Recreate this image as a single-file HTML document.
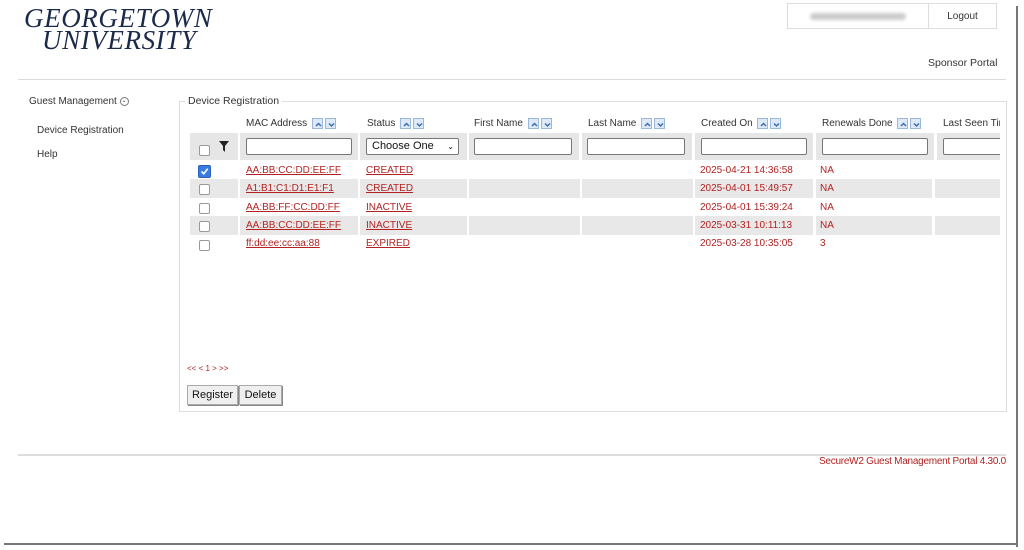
<!DOCTYPE html>
<html><head><meta charset="utf-8"><style>
*{box-sizing:border-box;margin:0;padding:0}
body{width:1024px;height:550px;background:#fff;font-family:"Liberation Sans",Arial,sans-serif;font-size:10px;color:#333;position:relative;overflow:hidden}
.a{position:absolute}
.sh{background:#777}
.logo{font-family:"Liberation Serif",serif;font-style:italic;color:#1a2a4a;line-height:21px;letter-spacing:0.6px}
.arr{display:inline-block;width:11px;height:11px;border:1px solid #9bb8d8;background:#dde9f6;vertical-align:middle;margin-left:2px;position:relative}
.arr svg{position:absolute;left:1px;top:1px}
.inp{position:absolute;height:17px;border:1px solid #777;border-radius:2px;background:#fff}
.cb{position:absolute;width:11px;height:11px;border:1px solid #999;border-radius:2px;background:#fff}
.red{color:#b22222}
.lnk{color:#b22222;text-decoration:underline}
.btn{position:absolute;height:20px;border:1px solid #aaa;background:#efefef;font-size:11px;color:#111;text-align:center;line-height:18px;box-shadow:1px 1px 0 #888}
.t{margin-top:2px}
</style></head><body>
<div class="a sh" style="left:1016px;top:6px;width:2px;height:541px"></div>
<div class="a sh" style="left:4px;top:543px;width:1014px;height:2px"></div>

<div class="a logo" style="left:24px;top:8px;font-size:27px">GEORGETOWN</div>
<div class="a logo" style="left:42px;top:30px;font-size:27px">UNIVERSITY</div>

<div class="a" style="left:787px;top:3px;width:142px;height:26px;border:1px solid #ddd"><div style="margin:9px 22px;height:7px;background:#ccc;border-radius:4px;filter:blur(1.5px)"></div></div>
<div class="a" style="left:928px;top:3px;width:69px;height:26px;border:1px solid #ddd;text-align:center;line-height:26px;font-size:10px;color:#333">Logout</div>
<div class="a" style="left:928px;top:57px;font-size:10.5px;color:#333">Sponsor Portal</div>
<div class="a" style="left:18px;top:79px;width:988px;height:1px;background:#ddd"></div>

<div class="a" style="left:29px;top:96px">Guest Management <span style="display:inline-block;width:9px;height:9px;border:1px solid #777;border-radius:50%;font-size:6px;line-height:7px;text-align:center;vertical-align:middle">&#8964;</span></div>
<div class="a" style="left:37px;top:125px">Device Registration</div>
<div class="a" style="left:37px;top:149px">Help</div>

<div class="a" style="left:179px;top:101px;width:828px;height:311px;border:1px solid #ddd"></div>
<div class="a" style="left:185px;top:95px;background:#fff;padding:0 3px;font-size:10.5px">Device Registration</div>

<div class="a" style="top:118px;left:246px">MAC Address <span class="arr"><svg width="9" height="9"><path d="M2 6L4.5 3.5L7 6" stroke="#3a6fb0" stroke-width="1.5" fill="none"/></svg></span><span class="arr"><svg width="9" height="9"><path d="M2 3.5L4.5 6L7 3.5" stroke="#3a6fb0" stroke-width="1.5" fill="none"/></svg></span></div>
<div class="a" style="top:118px;left:367px">Status <span class="arr"><svg width="9" height="9"><path d="M2 6L4.5 3.5L7 6" stroke="#3a6fb0" stroke-width="1.5" fill="none"/></svg></span><span class="arr"><svg width="9" height="9"><path d="M2 3.5L4.5 6L7 3.5" stroke="#3a6fb0" stroke-width="1.5" fill="none"/></svg></span></div>
<div class="a" style="top:118px;left:474px">First Name <span class="arr"><svg width="9" height="9"><path d="M2 6L4.5 3.5L7 6" stroke="#3a6fb0" stroke-width="1.5" fill="none"/></svg></span><span class="arr"><svg width="9" height="9"><path d="M2 3.5L4.5 6L7 3.5" stroke="#3a6fb0" stroke-width="1.5" fill="none"/></svg></span></div>
<div class="a" style="top:118px;left:588px">Last Name <span class="arr"><svg width="9" height="9"><path d="M2 6L4.5 3.5L7 6" stroke="#3a6fb0" stroke-width="1.5" fill="none"/></svg></span><span class="arr"><svg width="9" height="9"><path d="M2 3.5L4.5 6L7 3.5" stroke="#3a6fb0" stroke-width="1.5" fill="none"/></svg></span></div>
<div class="a" style="top:118px;left:701px">Created On <span class="arr"><svg width="9" height="9"><path d="M2 6L4.5 3.5L7 6" stroke="#3a6fb0" stroke-width="1.5" fill="none"/></svg></span><span class="arr"><svg width="9" height="9"><path d="M2 3.5L4.5 6L7 3.5" stroke="#3a6fb0" stroke-width="1.5" fill="none"/></svg></span></div>
<div class="a" style="top:118px;left:822px">Renewals Done <span class="arr"><svg width="9" height="9"><path d="M2 6L4.5 3.5L7 6" stroke="#3a6fb0" stroke-width="1.5" fill="none"/></svg></span><span class="arr"><svg width="9" height="9"><path d="M2 3.5L4.5 6L7 3.5" stroke="#3a6fb0" stroke-width="1.5" fill="none"/></svg></span></div>
<div class="a" style="top:118px;left:943px;width:57px;overflow:hidden;white-space:nowrap">Last Seen Time</div>

<div class="a" style="top:133px;left:190px;width:48px;height:27px;background:#e6e6e6"></div>
<div class="a" style="top:133px;left:240px;width:118px;height:27px;background:#e6e6e6"></div>
<div class="a" style="top:133px;left:360px;width:107px;height:27px;background:#e6e6e6"></div>
<div class="a" style="top:133px;left:469px;width:110px;height:27px;background:#e6e6e6"></div>
<div class="a" style="top:133px;left:582px;width:110px;height:27px;background:#e6e6e6"></div>
<div class="a" style="top:133px;left:695px;width:118px;height:27px;background:#e6e6e6"></div>
<div class="a" style="top:133px;left:816px;width:118px;height:27px;background:#e6e6e6"></div>
<div class="a" style="top:133px;left:937px;width:63px;height:27px;background:#e6e6e6"></div>
<div class="cb" style="left:199px;top:145px"></div>
<svg class="a" style="left:219px;top:141px" width="10" height="11"><path d="M0 0H10L6 5V11L4 9V5Z" fill="#222"/></svg>
<div class="inp" style="left:246px;top:138px;width:106px"></div>
<div class="inp" style="left:366px;top:138px;width:93px;font-size:11px;color:#111;padding-left:5px;line-height:15px">Choose One<span style="position:absolute;right:4px;font-size:8px">&#8964;</span></div>
<div class="inp" style="left:474px;top:138px;width:98px"></div>
<div class="inp" style="left:587px;top:138px;width:98px"></div>
<div class="inp" style="left:701px;top:138px;width:106px"></div>
<div class="inp" style="left:822px;top:138px;width:106px"></div>
<div class="inp" style="left:943px;top:138px;width:60px;border-right:none"></div>
<div class="a" style="left:1000px;top:102px;width:6px;height:150px;background:#fff"></div>

<div class="a" style="top:179px;left:190px;width:810px;height:19px;background:#e8e8e8"></div>
<div class="a" style="top:216px;left:190px;width:810px;height:19px;background:#e8e8e8"></div>
<div class="a" style="top:179px;left:238px;width:2px;height:56px;background:#fff"></div>
<div class="a" style="top:179px;left:358px;width:2px;height:56px;background:#fff"></div>
<div class="a" style="top:179px;left:467px;width:2px;height:56px;background:#fff"></div>
<div class="a" style="top:179px;left:580px;width:2px;height:56px;background:#fff"></div>
<div class="a" style="top:179px;left:693px;width:2px;height:56px;background:#fff"></div>
<div class="a" style="top:179px;left:813px;width:3px;height:56px;background:#fff"></div>
<div class="a" style="top:179px;left:932px;width:3px;height:56px;background:#fff"></div>

<div class="a" style="left:198px;top:165px;width:13px;height:13px;background:#3b7be0;border-radius:2px;border:1px solid #2a5fb8"><svg width="11" height="11"><path d="M2.5 5.5L4.7 7.8L8.7 2.8" stroke="#fff" stroke-width="1.6" fill="none"/></svg></div>
<div class="cb" style="left:199px;top:184px"></div>
<div class="cb" style="left:199px;top:203px"></div>
<div class="cb" style="left:199px;top:221px"></div>
<div class="cb" style="left:199px;top:240px"></div>

<div class="a lnk" style="left:246px;top:165px">AA:BB:CC:DD:EE:FF</div>
<div class="a lnk" style="left:246px;top:183px">A1:B1:C1:D1:E1:F1</div>
<div class="a lnk" style="left:246px;top:202px">AA:BB:FF:CC:DD:FF</div>
<div class="a lnk" style="left:246px;top:220px">AA:BB:CC:DD:EE:FF</div>
<div class="a lnk" style="left:246px;top:238px">ff:dd:ee:cc:aa:88</div>

<div class="a lnk" style="left:366px;top:165px">CREATED</div>
<div class="a lnk" style="left:366px;top:183px">CREATED</div>
<div class="a lnk" style="left:366px;top:202px">INACTIVE</div>
<div class="a lnk" style="left:366px;top:220px">INACTIVE</div>
<div class="a lnk" style="left:366px;top:238px">EXPIRED</div>

<div class="a red" style="left:700px;top:165px">2025-04-21 14:36:58</div>
<div class="a red" style="left:700px;top:183px">2025-04-01 15:49:57</div>
<div class="a red" style="left:700px;top:202px">2025-04-01 15:39:24</div>
<div class="a red" style="left:700px;top:220px">2025-03-31 10:11:13</div>
<div class="a red" style="left:700px;top:238px">2025-03-28 10:35:05</div>

<div class="a red" style="left:820px;top:165px">NA</div>
<div class="a red" style="left:820px;top:183px">NA</div>
<div class="a red" style="left:820px;top:202px">NA</div>
<div class="a red" style="left:820px;top:220px">NA</div>
<div class="a red" style="left:820px;top:238px">3</div>

<div class="a red" style="left:187px;top:364px;font-size:8px">&lt;&lt; &lt; 1 &gt; &gt;&gt;</div>
<div class="btn" style="left:187px;top:385px;width:51px">Register</div>
<div class="btn" style="left:239px;top:385px;width:43px">Delete</div>

<div class="a" style="left:18px;top:454px;width:988px;height:2px;background:#ddd"></div>
<div class="a red" style="right:18px;top:456px;white-space:nowrap;text-align:right;font-size:10px;letter-spacing:-0.25px">SecureW2 Guest Management Portal 4.30.0</div>
</body></html>
